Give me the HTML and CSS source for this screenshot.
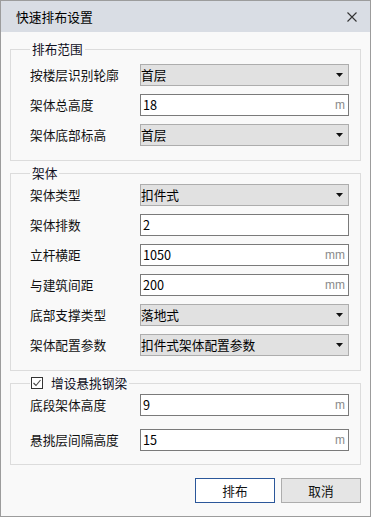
FILE: index.html
```html
<!DOCTYPE html>
<html lang="zh-CN">
<head>
<meta charset="utf-8">
<title>快速排布设置</title>
<link rel="stylesheet" href="styles.css">
</head>
<body>
<div class="window">
  <div class="titlebar">
    <span class="title">快速排布设置</span>
    <svg class="close" width="10" height="10" viewBox="0 0 10 10"><path d="M0.5 0.5 L9.5 9.5 M9.5 0.5 L0.5 9.5" stroke="#333" stroke-width="1.1" fill="none"/></svg>
  </div>
  <div class="content">
    <fieldset class="group g1">
      <legend>排布范围</legend>
      <div class="rows">
        <div class="row"><span class="label">按楼层识别轮廓</span><div class="field select"><span class="val">首层</span><svg class="arrow" width="7" height="4" viewBox="0 0 7 4"><path d="M0 0 H7 L3.5 4 Z" fill="#111"/></svg></div></div>
        <div class="row"><span class="label">架体总高度</span><div class="field input"><span class="val">18</span><span class="unit">m</span></div></div>
        <div class="row"><span class="label">架体底部标高</span><div class="field select"><span class="val">首层</span><svg class="arrow" width="7" height="4" viewBox="0 0 7 4"><path d="M0 0 H7 L3.5 4 Z" fill="#111"/></svg></div></div>
      </div>
    </fieldset>
    <fieldset class="group g2">
      <legend>架体</legend>
      <div class="rows">
        <div class="row"><span class="label">架体类型</span><div class="field select"><span class="val">扣件式</span><svg class="arrow" width="7" height="4" viewBox="0 0 7 4"><path d="M0 0 H7 L3.5 4 Z" fill="#111"/></svg></div></div>
        <div class="row"><span class="label">架体排数</span><div class="field input"><span class="val">2</span></div></div>
        <div class="row"><span class="label">立杆横距</span><div class="field input"><span class="val">1050</span><span class="unit">mm</span></div></div>
        <div class="row"><span class="label">与建筑间距</span><div class="field input"><span class="val">200</span><span class="unit">mm</span></div></div>
        <div class="row"><span class="label">底部支撑类型</span><div class="field select"><span class="val">落地式</span><svg class="arrow" width="7" height="4" viewBox="0 0 7 4"><path d="M0 0 H7 L3.5 4 Z" fill="#111"/></svg></div></div>
        <div class="row"><span class="label">架体配置参数</span><div class="field select"><span class="val">扣件式架体配置参数</span><svg class="arrow" width="7" height="4" viewBox="0 0 7 4"><path d="M0 0 H7 L3.5 4 Z" fill="#111"/></svg></div></div>
      </div>
    </fieldset>
    <fieldset class="group g3">
      <legend><span class="check"><svg width="10" height="10" viewBox="0 0 10 10"><path d="M1.5 5 L4 7.5 L8.5 2" stroke="#444" stroke-width="1.1" fill="none"/></svg></span><span>增设悬挑钢梁</span></legend>
      <div class="rows">
        <div class="row"><span class="label">底段架体高度</span><div class="field input"><span class="val">9</span><span class="unit">m</span></div></div>
        <div class="row"><span class="label">悬挑层间隔高度</span><div class="field input"><span class="val">15</span><span class="unit">m</span></div></div>
      </div>
    </fieldset>
    <div class="buttons">
      <div class="btn primary">排布</div>
      <div class="btn">取消</div>
    </div>
  </div>
</div>
</body>
</html>
```

FILE: styles.css
```css
html, body {
  margin: 0;
  padding: 0;
  background: #ffffff;
}
.window {
  width: 371px;
  height: 517px;
  box-sizing: border-box;
  border: 1px solid #9c9c9c;
  background: #f9f9f9;
  display: flex;
  flex-direction: column;
  font-family: "Noto Sans CJK SC", "Noto Sans", sans-serif;
  font-size: 12.7px;
  color: #111;
}
.titlebar {
  height: 31px;
  flex: none;
  background: #d9dde4;
  display: flex;
  align-items: center;
  justify-content: space-between;
  padding: 0 13px 0 15px;
}
.title {
  font-size: 12.8px;
  line-height: 16px;
  color: #000;
}
.close {
  display: block;
}
.content {
  padding: 10px 9px 0 9px;
  display: flex;
  flex-direction: column;
}
.group {
  margin: 0;
  border: 1px solid #dcdcdc;
  padding: 8px 11px 14px 19px;
  min-width: 0;
}
.group legend {
  padding: 0 2px;
  line-height: 14px;
  height: 14px;
  font-size: 12.7px;
  color: #0f0f1e;
}
.g2, .g3 {
  margin-top: 5px;
  padding-top: 4px;
}
.g3 {
  padding-bottom: 13px;
}
.g3 legend {
  display: flex;
  align-items: center;
  gap: 8px;
  padding-left: 1px;
}
.check {
  width: 10px;
  height: 10px;
  border: 1px solid #333;
  background: #fff;
  display: flex;
}
.check svg {
  display: block;
}
.rows {
  display: flex;
  flex-direction: column;
  gap: 8px;
}
.g3 .rows {
  gap: 13px;
}
.row {
  display: flex;
  align-items: center;
  height: 22px;
}
.label {
  width: 110px;
  flex: none;
  line-height: 16px;
  color: #111;
}
.field {
  flex: 1;
  height: 22px;
  box-sizing: border-box;
  display: flex;
  align-items: center;
  justify-content: space-between;
  line-height: 18px;
}
.select {
  background: #e1e1e1;
  border: 1px solid #adadad;
  padding: 0 5px 0 0;
}
.input {
  background: #ffffff;
  border: 1px solid #7a7a7a;
  padding: 0 3px 0 2px;
}
.val {
  color: #000;
}
.unit {
  font-family: "Liberation Sans", Arial, sans-serif;
  font-size: 12px;
  color: #8a8a8a;
}
.arrow {
  display: block;
}
.buttons {
  margin-top: 13px;
  display: flex;
  justify-content: flex-end;
  gap: 6px;
}
.btn {
  width: 80px;
  height: 25px;
  box-sizing: border-box;
  border: 1px solid #adadad;
  background: #e5e5e5;
  display: flex;
  align-items: center;
  justify-content: center;
  color: #111;
  font-size: 12.7px;
}
.btn.primary {
  background: #ffffff;
  border-color: #2b579a;
}
```
